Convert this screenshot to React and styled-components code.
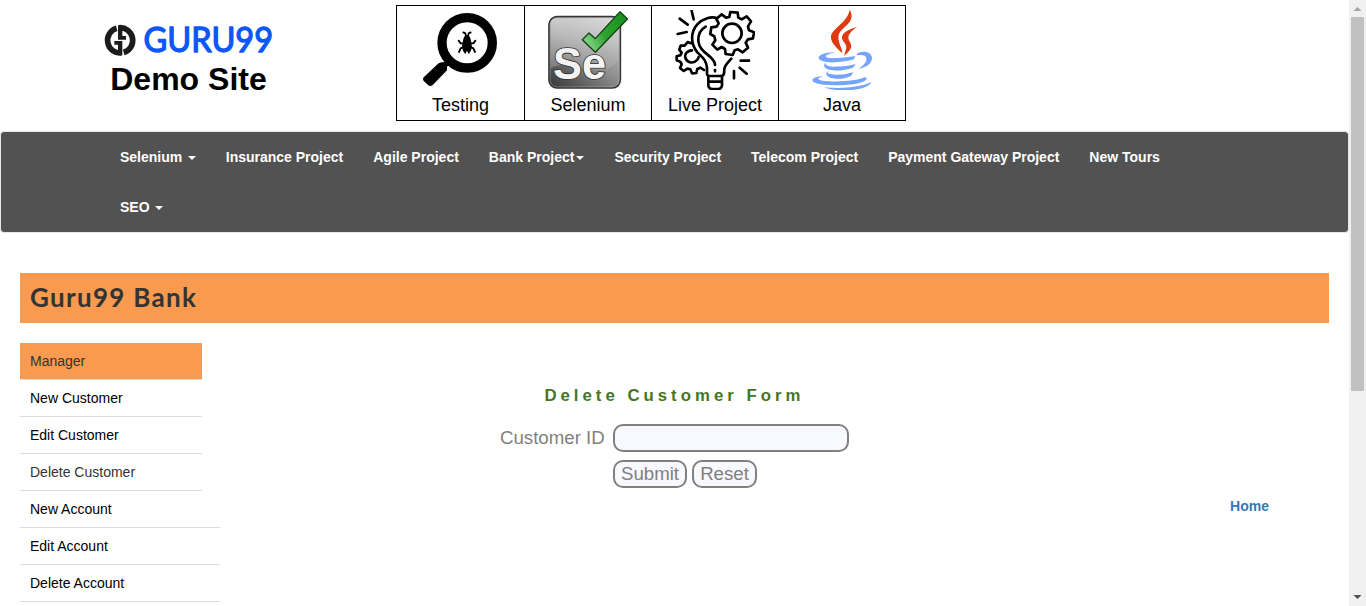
import React from 'react';
import styled, { createGlobalStyle } from 'styled-components';

const GlobalStyle = createGlobalStyle`
  * { box-sizing: border-box; }
  body {
    margin: 0;
    background: #fff;
    color: #333;
    font: 14px/20px "Liberation Sans", Arial, sans-serif;
    overflow: hidden;
  }
`;

const Window = styled.div`
  display: grid;
  grid-template-columns: 1349px 17px;
  height: 606px;
  overflow: hidden;
`;

const Page = styled.div`
  height: 606px;
  overflow: hidden;
`;

const Header = styled.header`
  display: flex;
  height: 131px;
  padding: 5px 0 0 104px;
`;

const Brand = styled.div`
  width: 169px;
  padding-top: 18px;
  text-align: center;
`;

const BrandLogo = styled.div`
  display: flex;
  height: 34px;

  svg { display: block; flex: none; overflow: visible; }
`;

const SiteName = styled.h2`
  margin: 4px 0 0;
  font-size: 32px;
  line-height: 37px;
  font-weight: bold;
  color: #000;
`;

const Topics = styled.div`
  display: flex;
  height: 116px;
  margin-left: 123px;
  border: 1px solid #000;
`;

const Topic = styled.a`
  display: flex;
  flex-direction: column;
  align-items: center;
  width: ${(p) => p.$width || 127}px;
  padding-top: 4px;
  border-right: ${(p) => (p.$last ? 'none' : '1px solid #000')};
  color: #000;
  font-size: 18px;
  line-height: 30px;

  svg { display: block; width: 80px; height: 80px; }
`;

const Navbar = styled.nav`
  height: 102px;
  border: 1px solid #e7e7e7;
  border-radius: 4px;
  background: #525252;
  padding: 0 103px 0 104px;
`;

const NavList = styled.div`
  display: flex;
  flex-wrap: wrap;
`;

const NavLink = styled.a`
  display: flex;
  align-items: center;
  height: 50px;
  padding: 0 15px;
  color: #fff;
  font-weight: bold;
  white-space: nowrap;
`;

const Caret = styled.span`
  margin-left: ${(p) => (p.$tight ? 2 : 5.5)}px;
  margin-top: 2px;
  border-top: 4px solid #fff;
  border-left: 4px solid transparent;
  border-right: 4px solid transparent;
`;

const Banner = styled.h2`
  height: 50px;
  margin: 40px 20px 20px;
  padding-left: 10px;
  background: #f89a50;
  color: #333;
  font: bold 26px/48px Lato, "Open Sans", sans-serif;
  letter-spacing: 1.3px;
`;

const Content = styled.div`
  display: flex;
  padding-left: 20px;
`;

const Menu = styled.div`
  width: 200px;
`;

const MenuItem = styled.a`
  display: block;
  width: ${(p) => (p.$wide ? 200 : 182)}px;
  height: 37px;
  padding: 8px 10px;
  border-bottom: 1px solid #dcdcdc;
  background: ${(p) => (p.$active ? '#f89a50' : 'transparent')};
  color: ${(p) => (p.$muted ? '#333' : '#000')};
`;

const Main = styled.main`
  display: flex;
  flex-direction: column;
  width: 1109px;
  padding-top: 42px;
`;

const FormTitle = styled.h3`
  margin: 0;
  padding-left: 324.4px;
  color: #47761e;
  font-size: 16.8px;
  line-height: 22px;
  letter-spacing: 4px;
`;

const Form = styled.form`
  display: grid;
  grid-template-columns: 105px 236px;
  column-gap: 8px;
  row-gap: 8px;
  padding: 17px 0 0 280px;
  color: gray;
  font-size: 18.67px;
`;

const Label = styled.label`
  line-height: 28px;
`;

const TextInput = styled.input`
  height: 28px;
  border: 2px solid gray;
  border-radius: 10px;
  background: ghostwhite;
`;

const Actions = styled.div`
  grid-column: 2;
  display: flex;
  gap: 5px;
`;

const Button = styled.button`
  width: ${(p) => p.$width}px;
  height: 28px;
  padding: 0;
  border: 2px solid gray;
  border-radius: 10px;
  background: ghostwhite;
  color: gray;
  font: 18.67px/22px "Liberation Sans", Arial, sans-serif;
`;

const HomeLink = styled.a`
  align-self: flex-end;
  margin: 8px 60px 0 0;
  color: #337ab7;
  font-weight: bold;
`;

const Scrollbar = styled.div`
  display: flex;
  flex-direction: column;
  justify-content: space-between;
  height: 606px;
  background: #f1f1f1;
`;

const Thumb = styled.div`
  width: 13px;
  height: 374px;
  margin: 0 2px auto;
  background: #c1c1c1;
`;

const ScrollArrow = styled.svg`
  display: block;
  width: 17px;
  height: 17px;
`;

const BrandMark = () => (
  <svg width="32" height="32" viewBox="12 8 96 96">
    <g fill="none" stroke="#1c1c1e" strokeWidth="17">
      <path d="M50 23.500A38 38 0 0 0 64 97.800" />
      <path d="M71 96.500A38 38 0 0 0 57 22.200" />
    </g>
    <path d="M43 62H67V105L54 105V73H43Z" fill="#1c1c1e" />
    <path d="M78 58H54V15L67 15V47H78Z" fill="#1c1c1e" />
  </svg>
);

const BrandWord = () => (
  <svg width="137" height="44" viewBox="0 0 137 44">
    <text
      x="7.500"
      y="29.200"
      fill="#0b57f7"
      stroke="#0b57f7"
      strokeWidth="1.300"
      strokeLinejoin="round"
      fontFamily="Lato, sans-serif"
      fontSize="35"
      textLength="129.500"
      lengthAdjust="spacingAndGlyphs"
    >
      GURU99
    </text>
  </svg>
);

const TestingIcon = () => (
  <svg viewBox="93 30 240 240">
    <circle cx="231.500" cy="128.500" r="75.500" fill="none" stroke="#000" strokeWidth="28" />
    <path d="M161 187L172 176L184 187L171 200V211L129 254Q121 262 114 255L102 244Q96 237 102 231L144 191Q150 185 161 187Z" />
    <path d="M231 106C239 106 242 114 243 124C248 140 245 153 236 162L231 152L226 162C217 153 214 140 219 124C220 114 223 106 231 106Z" />
    <g fill="none" stroke="#000" strokeWidth="5.500" strokeLinecap="round" strokeLinejoin="round">
      <path d="M228 109L226 100L220 97M234 109L236 100L242 97" />
      <path d="M221 130L212 130L206 122M241 130L250 130L256 122" />
      <path d="M220 141L212 145L207 156M242 141L250 145L255 156" />
    </g>
  </svg>
);

const SeleniumIcon = () => (
  <svg viewBox="84 30 240 240">
    <defs>
      <linearGradient id="tile" x1="0.9" y1="0" x2="0.1" y2="1">
        <stop offset="0" stopColor="#c9c9c9" />
        <stop offset="0.5" stopColor="#909090" />
        <stop offset="1" stopColor="#3c3c3c" />
      </linearGradient>
      <linearGradient id="gloss" x1="0" y1="0" x2="0.6" y2="1">
        <stop offset="0" stopColor="#fff" stopOpacity="0.5" />
        <stop offset="1" stopColor="#fff" stopOpacity="0.12" />
      </linearGradient>
      <linearGradient id="tick" x1="0" y1="0.5" x2="1" y2="0">
        <stop offset="0" stopColor="#7ccf7c" />
        <stop offset="0.35" stopColor="#2ba52e" />
        <stop offset="1" stopColor="#168c1b" />
      </linearGradient>
    </defs>
    <rect x="87" y="50" width="214" height="214" rx="24" fill="url(#tile)" stroke="#343434" strokeWidth="5" />
    <rect x="90.500" y="53.500" width="207" height="207" rx="21" fill="none" stroke="#d0d0d0" strokeOpacity="0.55" strokeWidth="2" />
    <path d="M92 180V73Q92 55 110 55H278Q295 55 295 73V180C278 212 230 215 190 205C150 193 120 190 92 205Z" fill="url(#gloss)" />
    <text x="99" y="238" fill="#f4f4f4" stroke="#333" strokeWidth="5" paintOrder="stroke" fontFamily="Liberation Sans, Arial, sans-serif" fontSize="132" fontWeight="bold" textLength="159" lengthAdjust="spacingAndGlyphs">Se</text>
    <path d="M187 119L207 99L226 116L300 35L323 57L226 157Z" fill="url(#tick)" stroke="#173d18" strokeWidth="4" strokeLinejoin="round" />
  </svg>
);

const LiveProjectIcon = () => (
  <svg viewBox="81 30 240 240" fill="none" stroke="#000" strokeWidth="8" strokeLinecap="round" strokeLinejoin="round">
    <path d="M244 51L247 36L269 38L271 53L281 58L296 49L309 64L300 79L303 91L318 97L315 115L300 118L293 128L300 143L284 157L270 148L260 151L254 165L233 162L231 147L221 141L208 149L193 134L202 121L199 109L187 102L190 82L206 80L212 70L205 57L221 43L234 53Z" />
    <circle cx="252" cy="100" r="29" />
    <path d="M208 55C190 48 165 55 148 73C126 97 128 133 148 157C163 172 174 178 177 203V222Q178 228 185 228H219Q226 228 228 221L229 207C231 194 240 187 250 176" />
    <path d="M173 80C157 89 150 104 151 123C153 147 172 158 187 171Q201 184 201 195M201 210V214" />
    <path d="M181 230V257Q182 267 192 267H211Q221 267 222 257V230M183 245H220" />
    <path d="M129 130L119 126L110 137L98 137L94 149L101 158L97 166L86 169V181L97 185L101 193L96 204L107 213L118 206L127 208L132 220L145 219L148 207L157 203L168 210" />
    <path d="M132 151C116 152 108 163 113 176C119 189 137 192 147 180Q151 176 152 171" />
    <path d="M131 33L137 58M95 56L119 74M89 102L116 96M278 182H303M275 203L296 221M258 213V235" />
  </svg>
);

const JavaIcon = () => (
  <svg viewBox="81 30 240 240">
    <g fill="#e03a12">
      <path d="M224 29C240 57 220 72 203 87C185 103 188 118 200 147L202 160C187 145 166 128 168 109C170 86 218 68 224 29Z" />
      <path d="M247 80C224 87 198 98 201 114C202 127 218 132 213 148L207 168C223 153 234 144 226 128C216 112 216 102 247 80Z" />
    </g>
    <g fill="#75a4fb">
      <path d="M180 157C166 161 148 166 153 171C160 178 209 173 241 168L237 178C207 187 155 192 137 181C117 169 150 156 180 157Z" />
      <path d="M246 160C270 149 290 157 291 174C291 191 274 202 250 207C262 198 275 188 274 176C273 164 261 164 246 166Z" />
      <path d="M155 188C146 193 158 199 176 200C203 200 227 197 242 192L234 203C210 212 175 214 158 208C144 202 145 190 155 188Z" />
      <path d="M161 214C152 219 162 223 181 224C204 225 220 221 235 217L228 228C206 238 177 239 163 232C151 226 151 216 161 214Z" />
      <path d="M145 229C127 234 124 239 142 242C176 247 249 244 268 232C272 231 277 234 274 239C258 254 195 258 146 254C95 249 108 229 145 229Z" />
      <path d="M148 261C193 268 262 261 289 246C281 265 240 271 205 271C181 271 159 268 148 261Z" />
    </g>
  </svg>
);

const navItems = [
  { label: 'Selenium', caret: true },
  { label: 'Insurance Project' },
  { label: 'Agile Project' },
  { label: 'Bank Project', caret: true, tight: true },
  { label: 'Security Project' },
  { label: 'Telecom Project' },
  { label: 'Payment Gateway Project' },
  { label: 'New Tours' },
  { label: 'SEO', caret: true },
];

const menuItems = [
  { label: 'Manager', active: true, muted: true },
  { label: 'New Customer' },
  { label: 'Edit Customer' },
  { label: 'Delete Customer', muted: true },
  { label: 'New Account', wide: true },
  { label: 'Edit Account', wide: true },
  { label: 'Delete Account', wide: true },
];

export default function App() {
  return (
    <Window>
      <GlobalStyle />
      <Page>
        <Header>
          <Brand>
            <BrandLogo>
              <BrandMark />
              <BrandWord />
            </BrandLogo>
            <SiteName>Demo Site</SiteName>
          </Brand>
          <Topics>
            <Topic $width={128}><TestingIcon />Testing</Topic>
            <Topic><SeleniumIcon />Selenium</Topic>
            <Topic><LiveProjectIcon />Live Project</Topic>
            <Topic $last $width={126}><JavaIcon />Java</Topic>
          </Topics>
        </Header>
        <Navbar>
          <NavList>
            {navItems.map((item) => (
              <NavLink key={item.label}>
                {item.label}
                {item.caret && <Caret $tight={item.tight} />}
              </NavLink>
            ))}
          </NavList>
        </Navbar>
        <Banner>Guru99 Bank</Banner>
        <Content>
          <Menu>
            {menuItems.map((item) => (
              <MenuItem key={item.label} $active={item.active} $muted={item.muted} $wide={item.wide}>
                {item.label}
              </MenuItem>
            ))}
          </Menu>
          <Main>
            <FormTitle>Delete Customer Form</FormTitle>
            <Form>
              <Label>Customer ID</Label>
              <TextInput />
              <Actions>
                <Button type="button" $width={74}>Submit</Button>
                <Button type="button" $width={65}>Reset</Button>
              </Actions>
            </Form>
            <HomeLink>Home</HomeLink>
          </Main>
        </Content>
      </Page>
      <Scrollbar>
        <ScrollArrow><path d="M4.500 11L8.500 7L12.500 11Z" fill="#a3a3a3" /></ScrollArrow>
        <Thumb />
        <ScrollArrow><path d="M4.500 6L8.500 10L12.500 6Z" fill="#505050" /></ScrollArrow>
      </Scrollbar>
    </Window>
  );
}
